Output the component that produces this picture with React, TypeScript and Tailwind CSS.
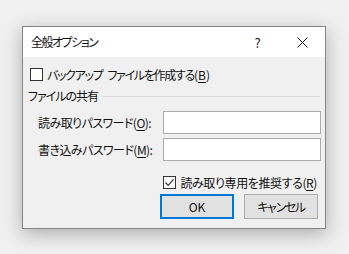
import React from "react";

const font = "[font-family:'Noto_Sans_CJK_JP','Noto_Sans',sans-serif] [font-feature-settings:'palt']";

function Box({ checked }: { checked?: boolean }) {
  return (
    <div className="w-[13px] h-[13px] border border-[#333333] bg-white flex items-center justify-center shrink-0">
      {checked && (
        <svg width="11" height="11" viewBox="0 0 11 11">
          <path d="M1.5 5.5 L4.2 8.3 L9.5 2.3" fill="none" stroke="#333333" strokeWidth="1.2" />
        </svg>
      )}
    </div>
  );
}

function Key({ k }: { k: string }) {
  return (
    <>
      (<span className="underline underline-offset-2">{k}</span>)
    </>
  );
}

export default function App() {
  return (
    <div className={`w-[349px] h-[254px] bg-[#f0f0f0] pl-[22px] pt-[26px] text-[12px] leading-none text-[#111] ${font}`}>
      <div className="w-[304px] h-[203px] border border-[#858585] bg-[#f0f0f0] flex flex-col shadow-[0_5px_18px_rgba(0,0,0,0.28)]">
        {/* Title bar */}
        <div className="h-[30px] bg-white flex items-center">
          <span className="pl-[8px] flex-1 tracking-[-1.5px]">全般オプション</span>
          <div className="w-[45px] h-full flex items-center justify-center text-[13px]">?</div>
          <div className="w-[45px] h-full flex items-center justify-center">
            <svg width="11" height="11" viewBox="0 0 11 11">
              <path d="M0.5 0.5 L10.5 10.5 M10.5 0.5 L0.5 10.5" stroke="#111" strokeWidth="1" />
            </svg>
          </div>
        </div>

        {/* Body */}
        <div className="flex flex-col pt-[11px]">
          <div className="h-[13px] flex items-center gap-[4px] pl-[7px]">
            <Box />
            <span className="tracking-[-1.3px] flex items-center">
              <span>バックアップ</span>
              <span className="inline-block w-[5px]" />
              <span>
                ファイルを作成する<span className="tracking-normal"><Key k="B" /></span>
              </span>
            </span>
          </div>

          <div className="h-[16px] mt-[7px] flex items-center gap-[5px] pl-[5px] pr-[5px]">
            <span className="tracking-[-1px]">ファイルの共有</span>
            <div className="flex-1 h-px bg-[#dadada]" />
          </div>

          <div className="h-[23px] mt-[7px] flex items-center pl-[15px] pr-[4px]">
            <span className="flex-1 tracking-[-0.55px]">
              読み取りパスワード<Key k="O" />:
            </span>
            <div className="w-[158px] h-[23px] border border-[#ababab] bg-white" />
          </div>

          <div className="h-[23px] mt-[4px] flex items-center pl-[15px] pr-[4px]">
            <span className="flex-1 tracking-[-0.55px]">
              書き込みパスワード<Key k="M" />:
            </span>
            <div className="w-[158px] h-[23px] border border-[#ababab] bg-white" />
          </div>

          <div className="h-[13px] mt-[15px] flex items-center justify-end gap-[4px] pr-[8px]">
            <Box checked />
            <span className="tracking-[-0.4px]">
              読み取り専用を推奨する<Key k="R" />
            </span>
          </div>

          <div className="h-[25px] mt-[5px] flex gap-[10px] pl-[137px]">
            <button className="w-[74px] h-[25px] border-2 border-[#0078d7] bg-[#e1e1e1] flex items-center justify-center">
              OK
            </button>
            <button className="w-[74px] h-[25px] border border-[#adadad] bg-[#e1e1e1] flex items-center justify-center tracking-[-1.4px]">
              キャンセル
            </button>
          </div>
        </div>
      </div>
    </div>
  );
}
